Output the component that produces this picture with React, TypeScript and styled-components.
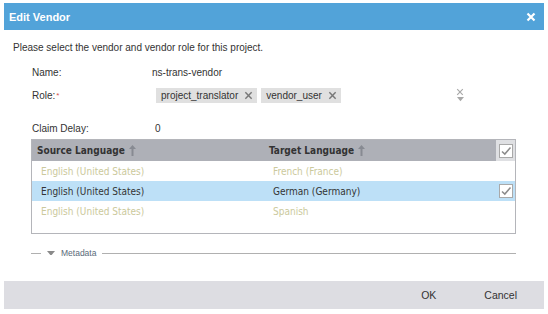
import React from "react";
import styled, { createGlobalStyle } from "styled-components";

const GlobalStyle = createGlobalStyle`
	body {
		margin: 0;
		background: #ffffff;
		font-family: "Liberation Sans", Arial, sans-serif;
		font-size: 10px;
		color: #333333;
	}
`;

const Dialog = styled.div`
	width: 540px;
	margin: 3px 0 0 4px;
	display: flex;
	flex-direction: column;
	background: #ffffff;
`;

const Header = styled.div`
	height: 27px;
	background: #52a3d9;
	display: flex;
	align-items: center;
	justify-content: space-between;
	padding: 0 8px 0 5px;
	color: #ffffff;
	font-weight: bold;
	font-size: 11px;
`;

const CloseButton = styled.span`
	display: flex;
	align-items: center;
	cursor: pointer;
`;

const Body = styled.div`
	display: flex;
	flex-direction: column;
	padding: 10px 0 0 9px;
	height: 251px;
	box-sizing: border-box;
`;

const Intro = styled.div`
	height: 16px;
	line-height: 16px;
	font-size: 10px;
`;

const Form = styled.div`
	display: grid;
	grid-template-columns: 120px 1fr;
	padding-left: 19px;
	margin-top: 7px;
`;

const Label = styled.div<{ $h: number; $bottom?: boolean }>`
	height: ${(p) => p.$h}px;
	display: flex;
	align-items: ${(p) => (p.$bottom ? "flex-end" : "center")};
	font-size: 10px;
`;

const Value = styled.div<{ $h: number; $pad?: number; $bottom?: boolean }>`
	height: ${(p) => p.$h}px;
	display: flex;
	align-items: ${(p) => (p.$bottom ? "flex-end" : "center")};
	padding-left: ${(p) => p.$pad ?? 0}px;
	font-size: 10px;
`;

const Required = styled.sup`
	color: #d9534f;
	font-size: 8px;
	margin-left: 1px;
`;

const Chips = styled.div`
	display: flex;
	gap: 4px;
	align-items: center;
`;

const Chip = styled.span`
	display: inline-flex;
	align-items: center;
	gap: 6px;
	height: 15px;
	padding: 0 4px 0 5px;
	background: #e0e0e0;
	font-size: 10px;
	color: #333333;
`;

const ClearBox = styled.div`
	margin-left: auto;
	margin-right: 80px;
	display: flex;
	flex-direction: column;
	align-items: center;
	gap: 1px;
`;

const Table = styled.div`
	margin: 5px 0 0 18px;
	width: 485px;
	height: 95px;
	border: 1px solid #b4b5ba;
	box-sizing: border-box;
	display: flex;
	flex-direction: column;
`;

const Row = styled.div<{ $selected?: boolean }>`
	display: grid;
	grid-template-columns: 232px 1fr 19px;
	height: 20px;
	align-items: center;
	background: ${(p) => (p.$selected ? "#bde0f7" : "transparent")};
`;

const HeadRow = styled(Row)`
	height: 21px;
	background: #aeb0b7;
`;

const HeadCell = styled.div`
	display: flex;
	align-items: center;
	gap: 4px;
	padding-left: 5px;
	font-family: "DejaVu Sans Condensed", "DejaVu Sans", sans-serif;
	font-weight: bold;
	font-size: 10px;
	color: #333333;
`;

const CheckHead = styled.div`
	height: 100%;
	background: #dfe0e3;
	display: flex;
	align-items: center;
	justify-content: center;
`;

const Cell = styled.div<{ $dim?: boolean }>`
	padding-left: 9px;
	font-family: "DejaVu Sans Condensed", "DejaVu Sans", sans-serif;
	font-size: 10px;
	color: ${(p) => (p.$dim ? "#cbc99c" : "#333333")};
`;

const CheckCell = styled.div`
	display: flex;
	align-items: center;
	justify-content: center;
`;

const Fieldset = styled.div`
	margin: 14px 0 0 18px;
	width: 485px;
	height: 10px;
	display: flex;
	align-items: center;
	gap: 6px;
	font-size: 8.5px;
	color: #5a6a7a;
`;

const Line = styled.div<{ $w?: number }>`
	height: 1px;
	background: #b0b0b0;
	width: ${(p) => (p.$w ? `${p.$w}px` : "auto")};
	flex: ${(p) => (p.$w ? "none" : "1")};
`;

const Footer = styled.div`
	height: 28px;
	background: #dddde2;
	display: flex;
	align-items: center;
	justify-content: flex-end;
	padding-right: 27px;
	gap: 48px;
`;

const FooterButton = styled.span`
	font-size: 10.5px;
	color: #333333;
	cursor: pointer;
`;

const XIcon = ({ size, color, stroke }: { size: number; color: string; stroke: number }) => (
	<svg width={size} height={size} viewBox="0 0 10 10">
		<path d="M1.5 1.5 L8.5 8.5 M8.5 1.5 L1.5 8.5" stroke={color} strokeWidth={stroke} />
	</svg>
);

const SortArrow = () => (
	<svg width="7" height="11" viewBox="0 0 7 11">
		<path d="M3.5 0 L7 4 L4.5 4 L4.5 11 L2.5 11 L2.5 4 L0 4 Z" fill="#878a92" />
	</svg>
);

const CheckBox = () => (
	<svg width="14" height="14" viewBox="0 0 14 14">
		<rect x="0.5" y="0.5" width="13" height="13" fill="#ffffff" stroke="#a9a9a9" />
		<path d="M3 7.5 L5.8 10 L11.5 3.5" fill="none" stroke="#8c8c8c" strokeWidth="1.6" />
	</svg>
);

const Caret = ({ color, w }: { color: string; w: number }) => (
	<svg width={w} height={w * 0.6} viewBox="0 0 10 6">
		<path d="M0 0 L10 0 L5 6 Z" fill={color} />
	</svg>
);

const rows = [
	{ source: "English (United States)", target: "French (France)", selected: false },
	{ source: "English (United States)", target: "German (Germany)", selected: true },
	{ source: "English (United States)", target: "Spanish", selected: false },
];

export default function App() {
	return (
		<>
			<GlobalStyle />
			<Dialog>
				<Header>
					<span>Edit Vendor</span>
					<CloseButton>
						<XIcon size={10} color="#ffffff" stroke={2.2} />
					</CloseButton>
				</Header>
				<Body>
					<Intro>Please select the vendor and vendor role for this project.</Intro>
					<Form>
						<Label $h={18}>Name:</Label>
						<Value $h={18}>ns-trans-vendor</Value>
						<Label $h={28}>
							Role:<Required>*</Required>
						</Label>
						<Value $h={28} $pad={4}>
							<Chips>
								<Chip>
									project_translator
									<XIcon size={9} color="#777777" stroke={1.6} />
								</Chip>
								<Chip>
									vendor_user
									<XIcon size={9} color="#777777" stroke={1.6} />
								</Chip>
							</Chips>
							<ClearBox>
								<XIcon size={8} color="#a8a8a8" stroke={1.4} />
								<Caret color="#a8a8a8" w={7} />
							</ClearBox>
						</Value>
						<Label $h={25} $bottom>Claim Delay:</Label>
						<Value $h={25} $pad={3} $bottom>0</Value>
					</Form>
					<Table>
						<HeadRow>
							<HeadCell>
								Source Language <SortArrow />
							</HeadCell>
							<HeadCell>
								Target Language <SortArrow />
							</HeadCell>
							<CheckHead>
								<CheckBox />
							</CheckHead>
						</HeadRow>
						{rows.map((r, i) => (
							<Row key={i} $selected={r.selected}>
								<Cell $dim={!r.selected}>{r.source}</Cell>
								<Cell $dim={!r.selected}>{r.target}</Cell>
								<CheckCell>{r.selected && <CheckBox />}</CheckCell>
							</Row>
						))}
					</Table>
					<Fieldset>
						<Line $w={10} />
						<Caret color="#8a8a8a" w={8} />
						<span>Metadata</span>
						<Line />
					</Fieldset>
				</Body>
				<Footer>
					<FooterButton>OK</FooterButton>
					<FooterButton>Cancel</FooterButton>
				</Footer>
			</Dialog>
		</>
	);
}
